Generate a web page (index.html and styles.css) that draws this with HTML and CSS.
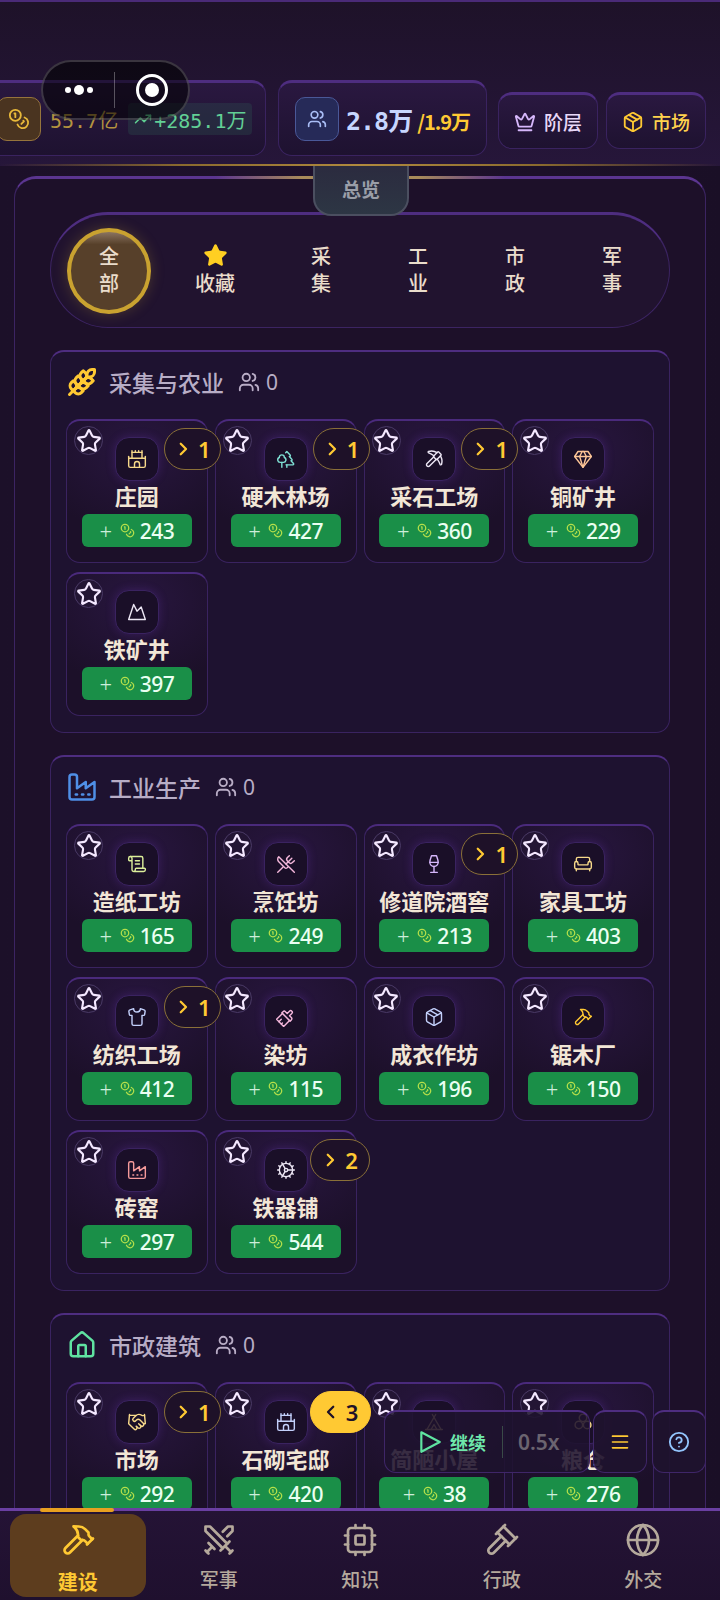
FILE: index.html
```html
<!DOCTYPE html>
<html lang="zh">
<head>
<meta charset="utf-8">
<title>建设</title>
<link rel="stylesheet" href="styles.css">
</head>
<body>
<svg class="sprite" xmlns="http://www.w3.org/2000/svg">
<symbol id="i-coins" viewBox="0 0 24 24"><circle cx="8" cy="8" r="6"/><path d="M18.09 10.37A6 6 0 1 1 10.34 18"/><path d="M7 6h1v4"/><path d="m16.71 13.88.7.71-2.82 2.82"/></symbol>
<symbol id="i-users" viewBox="0 0 24 24"><path d="M16 21v-2a4 4 0 0 0-4-4H6a4 4 0 0 0-4 4v2"/><circle cx="9" cy="7" r="4"/><path d="M22 21v-2a4 4 0 0 0-3-3.87"/><path d="M16 3.13a4 4 0 0 1 0 7.75"/></symbol>
<symbol id="i-trend" viewBox="0 0 24 24"><polyline points="22 7 13.5 15.5 8.5 10.5 2 17"/><polyline points="16 7 22 7 22 13"/></symbol>
<symbol id="i-crown" viewBox="0 0 24 24"><path d="M11.562 3.266a.5.5 0 0 1 .876 0L15.39 8.87a1 1 0 0 0 1.516.294L21.183 5.5a.5.5 0 0 1 .798.519l-2.834 10.246a1 1 0 0 1-.956.734H5.81a1 1 0 0 1-.957-.734L2.02 6.02a.5.5 0 0 1 .798-.519l4.276 3.664a1 1 0 0 0 1.516-.294z"/><path d="M5 21h14"/></symbol>
<symbol id="i-package" viewBox="0 0 24 24"><path d="M11 21.73a2 2 0 0 0 2 0l7-4A2 2 0 0 0 21 16V8a2 2 0 0 0-1-1.73l-7-4a2 2 0 0 0-2 0l-7 4A2 2 0 0 0 3 8v8a2 2 0 0 0 1 1.73z"/><path d="M12 22V12"/><path d="m3.3 7 8.7 5 8.7-5"/><path d="m7.5 4.27 9 5.15"/></symbol>
<symbol id="i-wheat" viewBox="0 0 24 24"><path d="M2 22 16 8"/><path d="M3.47 12.53 5 11l1.53 1.53a3.5 3.5 0 0 1 0 4.94L5 19l-1.53-1.53a3.5 3.5 0 0 1 0-4.94Z"/><path d="M7.47 8.53 9 7l1.53 1.53a3.5 3.5 0 0 1 0 4.94L9 15l-1.53-1.53a3.5 3.5 0 0 1 0-4.94Z"/><path d="M11.47 4.53 13 3l1.53 1.53a3.5 3.5 0 0 1 0 4.94L13 11l-1.53-1.53a3.5 3.5 0 0 1 0-4.94Z"/><path d="M20 2h2v2a4 4 0 0 1-4 4h-2V6a4 4 0 0 1 4-4Z"/><path d="M11.47 17.47 13 19l-1.53 1.53a3.5 3.5 0 0 1-4.94 0L5 19l1.53-1.53a3.5 3.5 0 0 1 4.94 0Z"/><path d="M15.47 13.47 17 15l-1.53 1.53a3.5 3.5 0 0 1-4.94 0L9 15l1.53-1.53a3.5 3.5 0 0 1 4.94 0Z"/><path d="M19.47 9.47 21 11l-1.53 1.53a3.5 3.5 0 0 1-4.94 0L13 11l1.53-1.53a3.5 3.5 0 0 1 4.94 0Z"/></symbol>
<symbol id="i-factory" viewBox="0 0 24 24"><path d="M2 20a2 2 0 0 0 2 2h16a2 2 0 0 0 2-2V8l-7 5V8l-7 5V4a2 2 0 0 0-2-2H4a2 2 0 0 0-2 2Z"/><path d="M17 18h1"/><path d="M12 18h1"/><path d="M7 18h1"/></symbol>
<symbol id="i-house" viewBox="0 0 24 24"><path d="M15 21v-8a1 1 0 0 0-1-1h-4a1 1 0 0 0-1 1v8"/><path d="M3 10a2 2 0 0 1 .709-1.528l7-5.999a2 2 0 0 1 2.582 0l7 5.999A2 2 0 0 1 21 10v9a2 2 0 0 1-2 2H5a2 2 0 0 1-2-2z"/></symbol>
<symbol id="i-castle" viewBox="0 0 24 24"><path d="M22 20v-9H2v9a2 2 0 0 0 2 2h16a2 2 0 0 0 2-2Z"/><path d="M18 11V4H6v7"/><path d="M15 22v-4a3 3 0 0 0-3-3a3 3 0 0 0-3 3v4"/><path d="M22 11V9"/><path d="M2 11V9"/><path d="M6 4V2"/><path d="M18 4V2"/><path d="M10 4V2"/><path d="M14 4V2"/></symbol>
<symbol id="i-trees" viewBox="0 0 24 24"><path d="M10 10v.2A3 3 0 0 1 8.9 16H5a3 3 0 0 1-1-5.8V10a3 3 0 0 1 6 0Z"/><path d="M7 16v6"/><path d="M13 19v3"/><path d="M12 19h8.3a1 1 0 0 0 .7-1.7L18 14h.3a1 1 0 0 0 .7-1.7L16 9h.2a1 1 0 0 0 .8-1.7L13 3l-1.4 1.5"/></symbol>
<symbol id="i-pickaxe" viewBox="0 0 24 24"><path d="M14.531 12.469 6.619 20.38a1 1 0 1 1-3-3l7.912-7.912"/><path d="M15.686 4.314A12.5 12.5 0 0 0 5.461 2.958 1 1 0 0 0 5.58 4.71a22 22 0 0 1 6.318 3.393"/><path d="M17.7 3.7a1 1 0 0 0-1.4 0l-4.6 4.6a1 1 0 0 0 0 1.4l2.6 2.6a1 1 0 0 0 1.4 0l4.6-4.6a1 1 0 0 0 0-1.4z"/><path d="M19.686 8.314a12.501 12.501 0 0 1 1.356 10.225 1 1 0 0 1-1.751-.119 22 22 0 0 0-3.393-6.319"/></symbol>
<symbol id="i-gem" viewBox="0 0 24 24"><path d="M6 3h12l4 6-10 13L2 9Z"/><path d="M11 3 8 9l4 13 4-13-3-6"/><path d="M2 9h20"/></symbol>
<symbol id="i-mountain" viewBox="0 0 24 24"><path d="m8 3 4 8 5-5 5 15H2L8 3z"/></symbol>
<symbol id="i-scroll" viewBox="0 0 24 24"><path d="M15 12h-5"/><path d="M15 8h-5"/><path d="M19 17V5a2 2 0 0 0-2-2H4"/><path d="M8 21h12a2 2 0 0 0 2-2v-1a1 1 0 0 0-1-1H11a1 1 0 0 0-1 1v1a2 2 0 1 1-4 0V5a2 2 0 1 0-4 0v2a1 1 0 0 0 1 1h3"/></symbol>
<symbol id="i-utensils" viewBox="0 0 24 24"><path d="m16 2-2.3 2.3a3 3 0 0 0 0 4.2l1.8 1.8a3 3 0 0 0 4.2 0L22 8"/><path d="M15 15 3.3 3.3a4.2 4.2 0 0 0 0 6l7.3 7.3c.7.7 2 .7 2.8 0L15 15Zm0 0 7 7"/><path d="m2.1 21.8 6.4-6.3"/><path d="m19 5-7 7"/></symbol>
<symbol id="i-wine" viewBox="0 0 24 24"><path d="M8 22h8"/><path d="M7 10h10"/><path d="M12 15v7"/><path d="M12 15a5 5 0 0 0 5-5c0-2-.5-4-2-8H9c-1.5 4-2 6-2 8a5 5 0 0 0 5 5Z"/></symbol>
<symbol id="i-sofa" viewBox="0 0 24 24"><path d="M20 9V6a2 2 0 0 0-2-2H6a2 2 0 0 0-2 2v3"/><path d="M2 16a2 2 0 0 0 2 2h16a2 2 0 0 0 2-2v-5a2 2 0 0 0-4 0v1.5a.5.5 0 0 1-.5.5h-11a.5.5 0 0 1-.5-.5V11a2 2 0 0 0-4 0z"/><path d="M4 18v2"/><path d="M20 18v2"/></symbol>
<symbol id="i-shirt" viewBox="0 0 24 24"><path d="M20.38 3.46 16 2a4 4 0 0 1-8 0L3.62 3.46a2 2 0 0 0-1.34 2.23l.58 3.47a1 1 0 0 0 .99.84H6v10c0 1.1.9 2 2 2h8a2 2 0 0 0 2-2V10h2.15a1 1 0 0 0 .99-.84l.58-3.47a2 2 0 0 0-1.34-2.23z"/></symbol>
<symbol id="i-brush" viewBox="0 0 24 24"><g transform="rotate(-135 12 12)"><path d="M14 19.9V16h3a2 2 0 0 0 2-2v-2H5v2c0 1.1.9 2 2 2h3v3.9a2 2 0 1 0 4 0Z"/><path d="M6 12V2h12v10"/><path d="M14 2v4"/><path d="M10 2v2"/></g></symbol>
<symbol id="i-hammer" viewBox="0 0 24 24"><path d="m15 12-8.373 8.373a1 1 0 1 1-3-3L12 9"/><path d="m18 15 4-4"/><path d="m21.5 11.5-1.914-1.914A2 2 0 0 1 19 8.172V7l-2.26-2.26a6 6 0 0 0-4.202-1.756L9 2.96l.92.82A6.18 6.18 0 0 1 12 8.4V10l2 2h1.172a2 2 0 0 1 1.414.586L18.5 14.5"/></symbol>
<symbol id="i-cog" viewBox="0 0 24 24"><path d="M12 20a8 8 0 1 0 0-16 8 8 0 0 0 0 16Z"/><path d="M12 14a2 2 0 1 0 0-4 2 2 0 0 0 0 4Z"/><path d="M12 2v2"/><path d="M12 22v-2"/><path d="m17 20.66-1-1.73"/><path d="M11 10.27 7 3.34"/><path d="m20.66 17-1.73-1"/><path d="m3.34 7 1.73 1"/><path d="M14 12h8"/><path d="M2 12h2"/><path d="m20.66 7-1.73 1"/><path d="m3.34 17 1.73-1"/><path d="m17 3.34-1 1.73"/><path d="M11 13.73l-4 6.93"/></symbol>
<symbol id="i-handshake" viewBox="0 0 24 24"><path d="m11 17 2 2a1 1 0 1 0 3-3"/><path d="m14 14 2.5 2.5a1 1 0 1 0 3-3l-3.88-3.88a3 3 0 0 0-4.24 0l-.88.88a1 1 0 1 1-3-3l2.81-2.81a5.79 5.79 0 0 1 7.06-.87l.47.28a2 2 0 0 0 1.42.25L21 4"/><path d="m21 3 1 11h-2"/><path d="M3 3 2 14l6.5 6.5a1 1 0 1 0 3-3"/><path d="M3 4h8"/></symbol>
<symbol id="i-tent" viewBox="0 0 24 24"><path d="M3.5 21 14 3"/><path d="M20.5 21 10 3"/><path d="M15.5 21 12 15l-3.5 6"/><path d="M2 21h20"/></symbol>
<symbol id="i-grain" viewBox="0 0 24 24"><circle cx="12" cy="7" r="4.5"/><circle cx="7" cy="15.5" r="4.5"/><circle cx="17" cy="15.5" r="4.5"/></symbol>
<symbol id="i-swords" viewBox="0 0 24 24"><polyline points="14.5 17.5 3 6 3 3 6 3 17.5 14.5"/><line x1="13" x2="19" y1="19" y2="13"/><line x1="16" x2="20" y1="16" y2="20"/><line x1="19" x2="21" y1="21" y2="19"/><polyline points="14.5 6.5 18 3 21 3 21 6 17.5 9.5"/><line x1="5" x2="9" y1="14" y2="18"/><line x1="7" x2="4" y1="17" y2="20"/><line x1="3" x2="5" y1="19" y2="21"/></symbol>
<symbol id="i-cpu" viewBox="0 0 24 24"><rect width="16" height="16" x="4" y="4" rx="2"/><rect width="6" height="6" x="9" y="9" rx="1"/><path d="M15 2v2"/><path d="M15 20v2"/><path d="M2 15h2"/><path d="M2 9h2"/><path d="M20 15h2"/><path d="M20 9h2"/><path d="M9 2v2"/><path d="M9 20v2"/></symbol>
<symbol id="i-gavel" viewBox="0 0 24 24"><path d="m14.5 12.5-8 8a2.119 2.119 0 1 1-3-3l8-8"/><path d="m16 16 6-6"/><path d="m8 8 6-6"/><path d="m9 7 8 8"/><path d="m21 11-8-8"/></symbol>
<symbol id="i-globe" viewBox="0 0 24 24"><circle cx="12" cy="12" r="10"/><path d="M12 2a14.5 14.5 0 0 0 0 20 14.5 14.5 0 0 0 0-20"/><path d="M2 12h20"/></symbol>
<symbol id="i-play" viewBox="0 0 24 24"><polygon points="4 3 21 12 4 21 4 3"/></symbol>
<symbol id="i-help" viewBox="0 0 24 24"><circle cx="12" cy="12" r="10"/><path d="M9.09 9a3 3 0 0 1 5.83 1c0 2-3 3-3 3"/><path d="M12 17h.01"/></symbol>
<symbol id="i-menu" viewBox="0 0 24 24"><path d="M3 5h18"/><path d="M3 12h18"/><path d="M3 19h18"/></symbol>
<symbol id="i-star" viewBox="0 0 24 24"><path d="M11.525 2.295a.53.53 0 0 1 .95 0l2.31 4.679a2.123 2.123 0 0 0 1.595 1.16l5.166.756a.53.53 0 0 1 .294.904l-3.736 3.638a2.123 2.123 0 0 0-.611 1.878l.882 5.14a.53.53 0 0 1-.771.56l-4.618-2.428a2.122 2.122 0 0 0-1.973 0L6.396 21.01a.53.53 0 0 1-.77-.56l.881-5.139a2.122 2.122 0 0 0-.611-1.879L2.16 9.795a.53.53 0 0 1 .294-.906l5.165-.755a2.122 2.122 0 0 0 1.597-1.16z"/></symbol>
<symbol id="i-chev-r" viewBox="0 0 24 24"><path d="m9 5 7 7-7 7"/></symbol>
<symbol id="i-chev-l" viewBox="0 0 24 24"><path d="m15 5-7 7 7 7"/></symbol>
</svg>

<div class="screen">
  <header class="topbar">
    <div class="res-card res-gold">
      <span class="res-icon res-icon-gold"><svg class="ico ico-22 c-gold"><use href="#i-coins"/></svg></span>
      <span class="gold-val">55.7亿</span>
      <span class="trend"><svg class="ico ico-18 c-green"><use href="#i-trend"/></svg><span class="trend-val">+285.1万</span></span>
    </div>
    <div class="res-card res-pop">
      <span class="res-icon res-icon-blue"><svg class="ico ico-20 c-blue"><use href="#i-users"/></svg></span>
      <span class="pop-val">2.8万</span>
      <span class="pop-cap">/1.9万</span>
    </div>
    <div class="top-btn"><svg class="ico ico-22 c-lilac"><use href="#i-crown"/></svg><span class="top-btn-text">阶层</span></div>
    <div class="top-btn top-btn-gold"><svg class="ico ico-22 c-yellow"><use href="#i-package"/></svg><span class="top-btn-text">市场</span></div>
  </header>

  <main class="panel">
    <div class="panel-tab">总览</div>
    <nav class="filters">
      <div class="filter filter-on"><span>全</span><span>部</span></div>
      <div class="filter filter-fav"><svg class="fav-star"><use href="#i-star"/></svg><span>收藏</span></div>
      <div class="filter"><span>采</span><span>集</span></div>
      <div class="filter"><span>工</span><span>业</span></div>
      <div class="filter"><span>市</span><span>政</span></div>
      <div class="filter"><span>军</span><span>事</span></div>
    </nav>

    <section class="group">
      <div class="group-head">
        <svg class="ico ico-head c-yellow thick"><use href="#i-wheat"/></svg>
        <h2 class="group-title">采集与农业</h2>
        <svg class="ico ico-22 c-muted"><use href="#i-users"/></svg>
        <span class="group-count">0</span>
      </div>
      <div class="grid">
        <article class="card"><span class="star"><svg class="ico ico-26 c-star"><use href="#i-star"/></svg></span><span class="badge"><svg class="ico ico-18"><use href="#i-chev-r"/></svg>1</span><span class="tile"><svg class="ico ico-20 c-sand"><use href="#i-castle"/></svg></span><h3 class="name">庄园</h3><div class="gain"><span class="plus">+</span><svg class="ico ico-15 c-lime"><use href="#i-coins"/></svg><span>243</span></div></article>
        <article class="card"><span class="star"><svg class="ico ico-26 c-star"><use href="#i-star"/></svg></span><span class="badge"><svg class="ico ico-18"><use href="#i-chev-r"/></svg>1</span><span class="tile"><svg class="ico ico-20 c-teal"><use href="#i-trees"/></svg></span><h3 class="name">硬木林场</h3><div class="gain"><span class="plus">+</span><svg class="ico ico-15 c-lime"><use href="#i-coins"/></svg><span>427</span></div></article>
        <article class="card"><span class="star"><svg class="ico ico-26 c-star"><use href="#i-star"/></svg></span><span class="badge"><svg class="ico ico-18"><use href="#i-chev-r"/></svg>1</span><span class="tile"><svg class="ico ico-20 c-white"><use href="#i-pickaxe"/></svg></span><h3 class="name">采石工场</h3><div class="gain"><span class="plus">+</span><svg class="ico ico-15 c-lime"><use href="#i-coins"/></svg><span>360</span></div></article>
        <article class="card"><span class="star"><svg class="ico ico-26 c-star"><use href="#i-star"/></svg></span><span class="tile"><svg class="ico ico-20 c-peach"><use href="#i-gem"/></svg></span><h3 class="name">铜矿井</h3><div class="gain"><span class="plus">+</span><svg class="ico ico-15 c-lime"><use href="#i-coins"/></svg><span>229</span></div></article>
        <article class="card"><span class="star"><svg class="ico ico-26 c-star"><use href="#i-star"/></svg></span><span class="tile"><svg class="ico ico-20 c-white"><use href="#i-mountain"/></svg></span><h3 class="name">铁矿井</h3><div class="gain"><span class="plus">+</span><svg class="ico ico-15 c-lime"><use href="#i-coins"/></svg><span>397</span></div></article>
      </div>
    </section>

    <section class="group">
      <div class="group-head">
        <svg class="ico ico-head c-azure"><use href="#i-factory"/></svg>
        <h2 class="group-title">工业生产</h2>
        <svg class="ico ico-22 c-muted"><use href="#i-users"/></svg>
        <span class="group-count">0</span>
      </div>
      <div class="grid">
        <article class="card"><span class="star"><svg class="ico ico-26 c-star"><use href="#i-star"/></svg></span><span class="tile"><svg class="ico ico-20 c-pale-lime"><use href="#i-scroll"/></svg></span><h3 class="name">造纸工坊</h3><div class="gain"><span class="plus">+</span><svg class="ico ico-15 c-lime"><use href="#i-coins"/></svg><span>165</span></div></article>
        <article class="card"><span class="star"><svg class="ico ico-26 c-star"><use href="#i-star"/></svg></span><span class="tile"><svg class="ico ico-20 c-pink"><use href="#i-utensils"/></svg></span><h3 class="name">烹饪坊</h3><div class="gain"><span class="plus">+</span><svg class="ico ico-15 c-lime"><use href="#i-coins"/></svg><span>249</span></div></article>
        <article class="card"><span class="star"><svg class="ico ico-26 c-star"><use href="#i-star"/></svg></span><span class="badge"><svg class="ico ico-18"><use href="#i-chev-r"/></svg>1</span><span class="tile"><svg class="ico ico-20 c-lilac"><use href="#i-wine"/></svg></span><h3 class="name">修道院酒窖</h3><div class="gain"><span class="plus">+</span><svg class="ico ico-15 c-lime"><use href="#i-coins"/></svg><span>213</span></div></article>
        <article class="card"><span class="star"><svg class="ico ico-26 c-star"><use href="#i-star"/></svg></span><span class="tile"><svg class="ico ico-20 c-sand"><use href="#i-sofa"/></svg></span><h3 class="name">家具工坊</h3><div class="gain"><span class="plus">+</span><svg class="ico ico-15 c-lime"><use href="#i-coins"/></svg><span>403</span></div></article>
        <article class="card"><span class="star"><svg class="ico ico-26 c-star"><use href="#i-star"/></svg></span><span class="badge"><svg class="ico ico-18"><use href="#i-chev-r"/></svg>1</span><span class="tile"><svg class="ico ico-20 c-periwinkle"><use href="#i-shirt"/></svg></span><h3 class="name">纺织工场</h3><div class="gain"><span class="plus">+</span><svg class="ico ico-15 c-lime"><use href="#i-coins"/></svg><span>412</span></div></article>
        <article class="card"><span class="star"><svg class="ico ico-26 c-star"><use href="#i-star"/></svg></span><span class="tile"><svg class="ico ico-20 c-pink"><use href="#i-brush"/></svg></span><h3 class="name">染坊</h3><div class="gain"><span class="plus">+</span><svg class="ico ico-15 c-lime"><use href="#i-coins"/></svg><span>115</span></div></article>
        <article class="card"><span class="star"><svg class="ico ico-26 c-star"><use href="#i-star"/></svg></span><span class="tile"><svg class="ico ico-20 c-periwinkle"><use href="#i-package"/></svg></span><h3 class="name">成衣作坊</h3><div class="gain"><span class="plus">+</span><svg class="ico ico-15 c-lime"><use href="#i-coins"/></svg><span>196</span></div></article>
        <article class="card"><span class="star"><svg class="ico ico-26 c-star"><use href="#i-star"/></svg></span><span class="tile"><svg class="ico ico-20 c-yellow"><use href="#i-hammer"/></svg></span><h3 class="name">锯木厂</h3><div class="gain"><span class="plus">+</span><svg class="ico ico-15 c-lime"><use href="#i-coins"/></svg><span>150</span></div></article>
        <article class="card"><span class="star"><svg class="ico ico-26 c-star"><use href="#i-star"/></svg></span><span class="tile"><svg class="ico ico-20 c-salmon"><use href="#i-factory"/></svg></span><h3 class="name">砖窑</h3><div class="gain"><span class="plus">+</span><svg class="ico ico-15 c-lime"><use href="#i-coins"/></svg><span>297</span></div></article>
        <article class="card"><span class="star"><svg class="ico ico-26 c-star"><use href="#i-star"/></svg></span><span class="badge badge-wide"><svg class="ico ico-18"><use href="#i-chev-r"/></svg>2</span><span class="tile"><svg class="ico ico-20 c-white"><use href="#i-cog"/></svg></span><h3 class="name">铁器铺</h3><div class="gain"><span class="plus">+</span><svg class="ico ico-15 c-lime"><use href="#i-coins"/></svg><span>544</span></div></article>
      </div>
    </section>

    <section class="group">
      <div class="group-head">
        <svg class="ico ico-head c-mint"><use href="#i-house"/></svg>
        <h2 class="group-title">市政建筑</h2>
        <svg class="ico ico-22 c-muted"><use href="#i-users"/></svg>
        <span class="group-count">0</span>
      </div>
      <div class="grid">
        <article class="card"><span class="star"><svg class="ico ico-26 c-star"><use href="#i-star"/></svg></span><span class="badge"><svg class="ico ico-18"><use href="#i-chev-r"/></svg>1</span><span class="tile"><svg class="ico ico-20 c-sand"><use href="#i-handshake"/></svg></span><h3 class="name">市场</h3><div class="gain"><span class="plus">+</span><svg class="ico ico-15 c-lime"><use href="#i-coins"/></svg><span>292</span></div></article>
        <article class="card"><span class="star"><svg class="ico ico-26 c-star"><use href="#i-star"/></svg></span><span class="badge badge-on"><svg class="ico ico-18"><use href="#i-chev-l"/></svg>3</span><span class="tile"><svg class="ico ico-20 c-periwinkle"><use href="#i-castle"/></svg></span><h3 class="name">石砌宅邸</h3><div class="gain"><span class="plus">+</span><svg class="ico ico-15 c-lime"><use href="#i-coins"/></svg><span>420</span></div></article>
        <article class="card"><span class="star"><svg class="ico ico-26 c-star"><use href="#i-star"/></svg></span><span class="tile"><svg class="ico ico-20 c-sand"><use href="#i-tent"/></svg></span><h3 class="name">简陋小屋</h3><div class="gain"><span class="plus">+</span><svg class="ico ico-15 c-lime"><use href="#i-coins"/></svg><span>38</span></div></article>
        <article class="card"><span class="star"><svg class="ico ico-26 c-star"><use href="#i-star"/></svg></span><span class="tile"><svg class="ico ico-20 c-sand"><use href="#i-grain"/></svg></span><h3 class="name">粮仓</h3><div class="gain"><span class="plus">+</span><svg class="ico ico-15 c-lime"><use href="#i-coins"/></svg><span>276</span></div></article>
      </div>
    </section>
  </main>

  <div class="capsule">
    <span class="cap-dots"><i class="dot"></i><i class="dot dot-big"></i><i class="dot"></i></span>
    <span class="cap-line"></span>
    <span class="cap-target"><i class="cap-core"></i></span>
  </div>

  <div class="controls">
    <div class="speed">
      <svg class="ico ico-26 c-mint"><use href="#i-play"/></svg>
      <span class="speed-label">继续</span>
      <span class="speed-line"></span>
      <span class="speed-val">0.5x</span>
    </div>
    <div class="ctl-btn"><svg class="ico ico-20 c-yellow"><use href="#i-menu"/></svg></div>
    <div class="ctl-btn"><svg class="ico ico-22 c-sky"><use href="#i-help"/></svg></div>
  </div>

  <nav class="tabbar">
    <span class="tab-mark"></span>
    <div class="tab tab-on"><svg class="ico ico-tab"><use href="#i-hammer"/></svg><span>建设</span></div>
    <div class="tab"><svg class="ico ico-tab"><use href="#i-swords"/></svg><span>军事</span></div>
    <div class="tab"><svg class="ico ico-tab"><use href="#i-cpu"/></svg><span>知识</span></div>
    <div class="tab"><svg class="ico ico-tab"><use href="#i-gavel"/></svg><span>行政</span></div>
    <div class="tab"><svg class="ico ico-tab"><use href="#i-globe"/></svg><span>外交</span></div>
  </nav>
</div>
</body>
</html>
```
FILE: styles.css
```css
* { box-sizing: border-box; }
html, body { margin: 0; padding: 0; background: #1a0f26; }
body { font-family: "Noto Sans CJK SC", "Noto Sans", sans-serif; color: #f2e6d6; }
.sprite { display: none; }
h2, h3 { margin: 0; font-weight: inherit; }

.ico { display: block; flex: none; fill: none; stroke: currentColor; stroke-width: 2; stroke-linecap: round; stroke-linejoin: round; }
.ico-15 { width: 15px; height: 15px; }
.ico-18 { width: 18px; height: 18px; }
.ico-20 { width: 20px; height: 20px; }
.ico-22 { width: 22px; height: 22px; }
.ico-26 { width: 26px; height: 26px; }
.ico-head { width: 30px; height: 30px; }
.ico-tab { width: 36px; height: 36px; stroke-width: 1.8; }
.thick { stroke-width: 2.4; }
.c-gold { color: #e8b93a; }
.c-green { color: #5fcf92; }
.c-blue { color: #a9bdf5; }
.c-lilac { color: #d6b7fb; }
.c-yellow { color: #ffc933; }
.c-muted { color: #b9adc6; }
.c-star { color: #f4e8ff; }
.c-sand { color: #f7d98a; }
.c-teal { color: #7fe0d4; }
.c-white { color: #ece6f4; }
.c-peach { color: #fdc597; }
.c-lime { color: #b6e04a; }
.c-azure { color: #4f8fe6; }
.c-pale-lime { color: #dcef9a; }
.c-pink { color: #f5b8dc; }
.c-periwinkle { color: #c3d0fb; }
.c-salmon { color: #f59a9a; }
.c-mint { color: #5fe3a1; }
.c-sky { color: #93c5fd; }

.screen { position: relative; width: 720px; height: 1600px; overflow: hidden; background: linear-gradient(90deg, #1c1029, #1e112c 50%, #1a0f26); }

/* top bar */
.topbar { height: 166px; padding-top: 80px; display: flex; align-items: flex-start; border-top: 2px solid #4a2a78; margin-bottom: 10px; background: linear-gradient(180deg, #1e1229, #26163a); position: relative; }
.topbar::after { content: ""; position: absolute; left: 0; right: 0; bottom: 0; height: 2px; background: linear-gradient(90deg, transparent, #8a6a2e 25%, #b08a3e 50%, #8a6a2e 75%, transparent); }
.res-card { height: 76px; margin-top: -2px; display: flex; align-items: center; padding: 0 16px; border: 1px solid #3a2360; border-top: 3px solid #4e2d80; border-radius: 14px; background: linear-gradient(180deg, #2a1840, #1e1230); }
.res-gold { width: 286px; margin-left: -20px; }
.res-pop { width: 209px; margin-left: 12px; }
.res-icon { width: 44px; height: 44px; border-radius: 10px; display: flex; align-items: center; justify-content: center; flex: none; }
.res-icon-gold { background: #4a3420; border: 1px solid #96743c; }
.res-icon-blue { background: #262a58; border: 1px solid #4a5898; }
.gold-val { margin-left: 9px; font-family: "DejaVu Sans Mono", "Noto Sans CJK SC", monospace; font-size: 20px; color: #b4933f; white-space: nowrap; flex: none; }
.trend { margin-left: 10px; height: 32px; padding: 0 6px; display: flex; align-items: center; gap: 2px; background: rgba(60, 160, 110, .14); border-radius: 4px; flex: none; }
.trend-val { font-family: "DejaVu Sans Mono", "Noto Sans CJK SC", monospace; font-size: 20px; color: #62cf96; white-space: nowrap; }
.pop-val { margin-left: 7px; font-family: "DejaVu Sans Mono", "Noto Sans CJK SC", monospace; font-size: 25px; font-weight: 700; color: #c7d6ff; letter-spacing: -1px; white-space: nowrap; }
.pop-cap { margin-left: 5px; margin-top: 4px; font-size: 20px; font-weight: 700; color: #ffc933; letter-spacing: -1px; white-space: nowrap; }
.top-btn { width: 100px; height: 57px; margin: 10px 0 0 11px; display: flex; align-items: center; justify-content: center; gap: 8px; border: 1px solid #3a2360; border-top: 3px solid #4e2d80; border-radius: 14px; background: linear-gradient(180deg, #2a1840, #1e1230); }
.top-btn-gold { margin-left: 8px; }
.top-btn-text { font-size: 19px; font-weight: 500; color: #e8d8f8; }
.top-btn-gold .top-btn-text { color: #ffd24d; }

/* panel */
.panel { position: relative; margin: 0 14px; padding: 36px 35px 0; border: 1px solid #3c2462; border-top: 3px solid #5b3590; border-radius: 22px 22px 0 0; background: #1d1029; height: 1500px; }
.panel::before { content: ""; position: absolute; left: 200px; right: 200px; top: -3px; height: 3px; background: linear-gradient(90deg, transparent, #a88a5a 30%, #a88a5a 70%, transparent); }
.panel-tab { position: absolute; left: 298px; top: -13px; width: 96px; height: 50px; padding-bottom: 4px; display: flex; align-items: center; justify-content: center; font-size: 19px; font-weight: 700; color: #9a9ea8; background: linear-gradient(180deg, #2b2b3f, #2d3644); border: 2px solid #4b4f60; border-top: none; border-radius: 0 0 18px 18px; z-index: 2; }

.filters { height: 116px; margin-top: -3px; padding: 0 16px; display: flex; align-items: center; gap: 13px; border: 1px solid #3c2462; border-top: 3px solid #4e2d80; border-radius: 58px; background: #21132f; }
.filter { width: 84px; height: 86px; padding-bottom: 4px; display: flex; flex-direction: column; align-items: center; justify-content: center; font-size: 20px; line-height: 27px; font-weight: 500; color: #eadccb; flex: none; }
.filter-on { border-radius: 50%; border: 4px solid #c9a230; background: linear-gradient(180deg, #8a7460 0, #57402a 16%, #57402a); box-shadow: 0 0 14px rgba(201, 162, 48, .25); }
.filter-fav { width: 102px; }
.fav-star { display: block; width: 25px; height: 25px; margin: 1px 0; fill: #ffcf22; stroke: #ffcf22; stroke-width: 1.5; stroke-linejoin: round; }

.group { margin-top: 22px; padding: 0 15px 16px; border: 1px solid #3a2360; border-top: 2px solid #4e2d80; border-radius: 14px; background: #1e1230; }
.group-head { height: 67px; padding: 0 0 8px 1px; display: flex; align-items: center; }
.group-title { margin-left: 12px; font-size: 23px; font-weight: 500; color: #b8adc6; }
.group-head .ico-22 { margin-left: 14px; }
.group-count { margin-left: 6px; font-family: "Noto Sans", sans-serif; font-size: 21px; color: #b8adc6; }

.grid { display: grid; grid-template-columns: repeat(4, 1fr); gap: 9px 7px; }
.card { position: relative; height: 144px; padding-top: 19px; display: flex; flex-direction: column; align-items: center; border: 1px solid #3a2360; border-top: 2px solid #4a2a7c; border-radius: 14px; background: radial-gradient(ellipse 90% 70% at 50% 20%, #28163f, #1c1029 85%); }
.star { position: absolute; left: 7px; top: 5px; width: 29px; height: 29px; border-radius: 50%; border: 1px solid #4a3a66; background: #231534; display: flex; align-items: center; justify-content: center; }
.badge { position: absolute; right: -14px; top: 7px; width: 57px; height: 42px; border: 1px solid #8a7038; border-radius: 21px; background: #1e1128; display: flex; align-items: center; justify-content: center; gap: 6px; font-family: "Noto Sans", sans-serif; font-size: 22px; font-weight: 600; color: #ffc933; z-index: 1; }
.badge .ico { stroke-width: 3; }
.badge-wide { width: 60px; right: -14px; }
.badge-on { width: 61px; background: #ffc933; border-color: #ffc933; color: #1e1128; right: -15px; }
.tile { width: 44px; height: 44px; margin-top: -3px; border-radius: 14px; border: 1px solid #3a2360; background: #1a0f28; display: flex; align-items: center; justify-content: center; box-shadow: 0 0 10px rgba(120, 60, 200, .25); }
.tile .ico { stroke-width: 1.7; }
.name { margin-top: -2px; font-size: 22px; line-height: 32px; font-weight: 700; color: #f2e6d6; white-space: nowrap; }
.gain { width: 110px; height: 33px; margin-top: 3px; border-radius: 6px; background: #1a8f48; display: flex; align-items: center; justify-content: center; gap: 5px; font-family: "Noto Sans", sans-serif; font-size: 21px; font-weight: 500; letter-spacing: -.5px; color: #eafff2; }
.plus { font-size: 22px; font-weight: 300; margin-right: 3px; color: #cdeedb; }

/* wechat capsule */
.capsule { position: absolute; left: 41px; top: 60px; width: 149px; height: 60px; display: flex; align-items: center; border-radius: 30px; border: 2px solid rgba(255, 255, 255, .18); background: rgba(0, 0, 0, .55); z-index: 5; }
.cap-dots { width: 71px; display: flex; align-items: center; justify-content: center; gap: 3px; }
.dot { display: block; width: 6px; height: 6px; border-radius: 50%; background: #fff; }
.dot-big { width: 10px; height: 10px; }
.cap-line { width: 1px; height: 36px; background: rgba(255, 255, 255, .3); }
.cap-target { margin-left: 21px; width: 32px; height: 32px; border: 3px solid #fff; border-radius: 50%; display: flex; align-items: center; justify-content: center; }
.cap-core { display: block; width: 14px; height: 14px; border-radius: 50%; background: #fff; }

/* floating controls */
.controls { position: absolute; left: 384px; top: 1410px; display: flex; gap: 3px; z-index: 6; }
.speed { width: 206px; height: 63px; padding-left: 32px; display: flex; align-items: center; border: 1px solid #3f2668; border-top: 2px solid #4e2d80; border-radius: 12px; background: rgba(30, 18, 46, .88); }
.speed-label { margin-left: 7px; font-size: 18px; font-weight: 700; color: #6fe8ab; }
.speed-line { width: 1px; height: 32px; margin-left: 16px; background: #3a4a48; }
.speed-val { margin-left: 15px; font-family: "Noto Sans", sans-serif; font-size: 21px; font-weight: 600; color: #6b6470; }
.ctl-btn { width: 54px; height: 63px; display: flex; align-items: center; justify-content: center; border: 1px solid #3f2668; border-top: 2px solid #4e2d80; border-radius: 12px; background: rgba(30, 18, 46, .92); }
.ctl-btn + .ctl-btn { margin-left: 2px; }

/* bottom nav */
.tabbar { position: absolute; left: 0; right: 0; bottom: 0; height: 92px; padding: 3px 8.5px 3px 9px; display: grid; grid-template-columns: repeat(5, 1fr); gap: 5px; border-top: 3px solid #6a3fa2; background: linear-gradient(180deg, #241335, #1f102e); z-index: 4; }
.tab-mark { position: absolute; left: 40px; top: -3px; width: 74px; height: 4px; background: #e8a020; border-radius: 2px; }
.tab { position: relative; display: flex; flex-direction: column; align-items: center; padding-top: 8px; gap: 8px; font-size: 19px; line-height: 26px; font-weight: 500; color: #b5a99c; }
.tab-on { gap: 11px; margin-left: 1px; border-radius: 16px; background: #5d3d1e; color: #ffc933; font-size: 20px; font-weight: 700; }
```
